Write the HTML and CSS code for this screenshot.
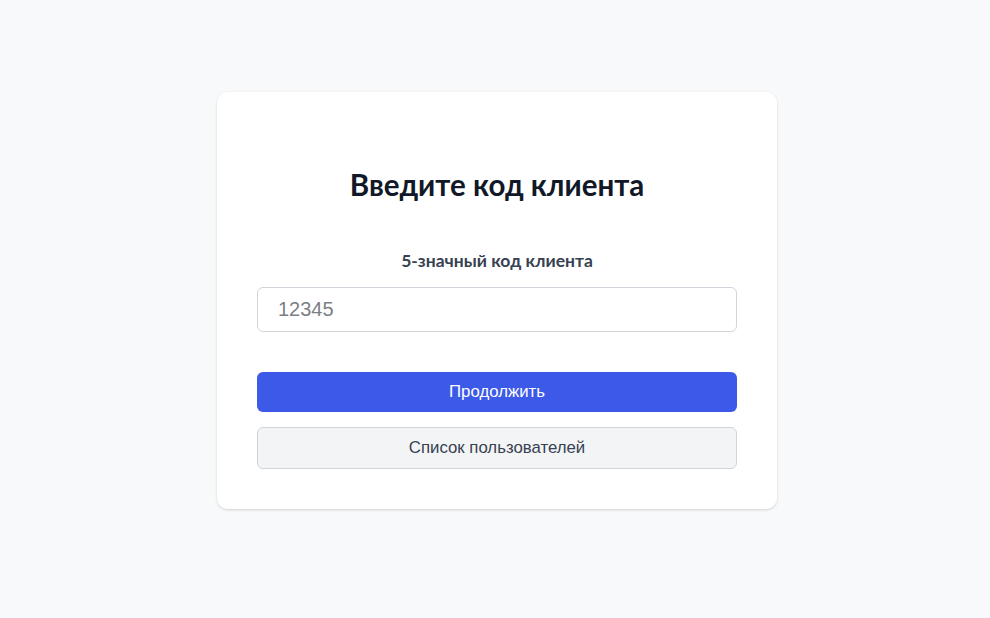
FILE: index.html
```html
<!DOCTYPE html>
<html lang="ru">
<head>
<meta charset="utf-8">
<title>Код клиента</title>
<link rel="stylesheet" href="styles.css">
</head>
<body>
<main class="page">
  <section class="card">
    <h1 class="title">Введите код клиента</h1>
    <label class="label" for="code">5-значный код клиента</label>
    <input class="input" id="code" type="text" placeholder="12345">
    <button class="btn btn-primary">Продолжить</button>
    <button class="btn btn-secondary">Список пользователей</button>
  </section>
</main>
</body>
</html>
```
FILE: styles.css
```css
* { box-sizing: border-box; }
html, body { margin: 0; padding: 0; }
body {
  background: #f8f9fb;
  font-family: "Liberation Sans", Arial, sans-serif;
  width: 990px;
  height: 618px;
}
.page {
  display: flex;
  justify-content: center;
  padding-top: 92px;
  padding-left: 4px;
}
.card {
  width: 560px;
  background: #ffffff;
  border-radius: 11px;
  box-shadow: 0 1px 3px rgba(0,0,0,0.12), 0 1px 2px rgba(0,0,0,0.04);
  padding: 75px 40px 40px;
  display: flex;
  flex-direction: column;
}
.title {
  margin: 0;
  font-family: Lato, "Noto Sans", sans-serif;
  font-weight: 700;
  font-size: 29.5px;
  line-height: 36px;
  color: #111827;
  text-align: center;
}
.label {
  margin-top: 46px;
  font-family: Lato, "Noto Sans", sans-serif;
  font-weight: 700;
  font-size: 17.5px;
  line-height: 24px;
  color: #374151;
  text-align: center;
}
.input {
  margin-top: 14px;
  height: 45px;
  border: 1px solid #d1d5db;
  border-radius: 6px;
  padding: 0 20px;
  font-family: "Liberation Sans", Arial, sans-serif;
  font-size: 20px;
  color: #111827;
  outline: none;
}
.input::placeholder { color: #7b7f86; }
.btn {
  font-family: "Liberation Sans", Arial, sans-serif;
  font-size: 16.8px;
  border-radius: 6px;
  cursor: pointer;
}
.btn-primary {
  margin-top: 40px;
  height: 40px;
  border: none;
  background: #3d59e7;
  color: #ffffff;
}
.btn-secondary {
  margin-top: 15px;
  height: 42px;
  border: 1px solid #d1d5db;
  background: #f3f4f6;
  color: #374151;
}
```
